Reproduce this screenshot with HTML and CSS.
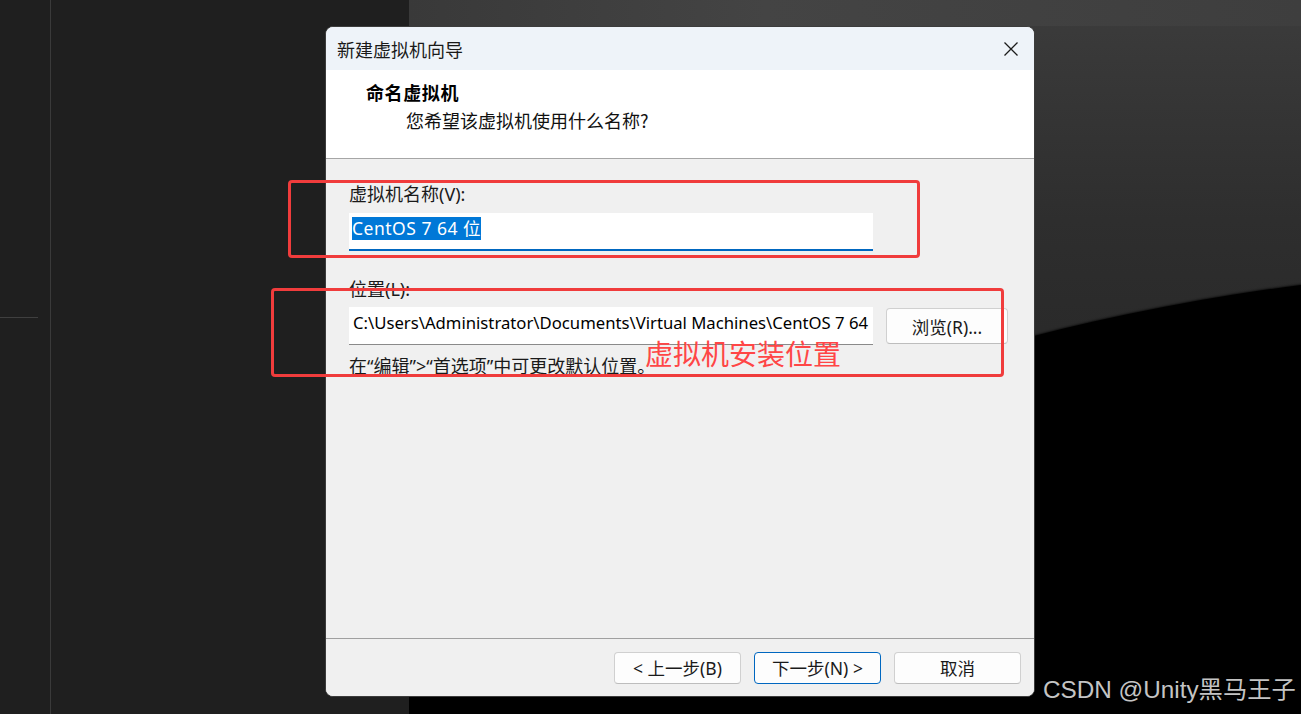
FILE: index.html
```html
<!DOCTYPE html>
<html lang="zh-CN">
<head>
<meta charset="utf-8">
<title>新建虚拟机向导</title>
<link rel="stylesheet" href="styles.css">
</head>
<body>
<div class="desktop">
  <div class="side">
    <div class="rail"><div class="rail-tick"></div></div>
  </div>
  <div class="stage">
    <div class="stage-top"></div>
    <div class="floor"></div>
  </div>
</div>

<div class="dialog">
  <div class="titlebar">
    <span class="title">新建虚拟机向导</span>
    <button class="close" aria-label="关闭">
      <svg width="16" height="16" viewBox="0 0 16 16"><path d="M1.5 1.5 L14.5 14.5 M14.5 1.5 L1.5 14.5" stroke="#1b1b1b" stroke-width="1.3" fill="none"/></svg>
    </button>
  </div>
  <div class="header">
    <div class="h-title">命名虚拟机</div>
    <div class="h-sub">您希望该虚拟机使用什么名称?</div>
  </div>
  <div class="body">
    <div class="label">虚拟机名称(V):</div>
    <div class="input active"><span class="sel">CentOS 7 64 位</span></div>
    <div class="label loc-label">位置(L):</div>
    <div class="row">
      <div class="input path">C:\Users\Administrator\Documents\Virtual Machines\CentOS 7 64</div>
      <button class="btn browse">浏览(R)...</button>
    </div>
    <div class="hint">在“编辑”&gt;“首选项”中可更改默认位置。</div>
  </div>
  <div class="footer">
    <button class="btn nav">&lt; 上一步(B)</button>
    <button class="btn nav primary">下一步(N) &gt;</button>
    <button class="btn nav">取消</button>
  </div>
</div>

<div class="mark mark-name"></div>
<div class="mark mark-loc"></div>
<div class="note">虚拟机安装位置</div>
<div class="watermark">CSDN @Unity黑马王子</div>
</body>
</html>
```

FILE: styles.css
```css
html, body {
  margin: 0;
  padding: 0;
  width: 1301px;
  height: 714px;
  overflow: hidden;
}
body {
  position: relative;
  background: #1f1f1f;
  font-family: "Noto Sans", "Noto Sans CJK SC", sans-serif;
}

/* desktop background */
.desktop {
  display: flex;
  width: 1301px;
  height: 714px;
  overflow: hidden;
}
.side {
  width: 409px;
  height: 714px;
  background: #1f1f1f;
}
.rail {
  width: 51px;
  height: 714px;
  box-sizing: border-box;
  padding-top: 317px;
  border-right: 1px solid #3a3a3a;
}
.rail-tick {
  width: 38px;
  height: 1px;
  background: #3f3f3f;
}
.stage {
  flex: 1;
  position: relative;
  overflow: hidden;
  background: linear-gradient(180deg, #3c3c3c 0px, #363636 90px, #2e2e2e 220px, #2a2a2a 330px);
}
.stage-top {
  height: 26px;
  background: linear-gradient(90deg, #393939, #444 40%, #3e3e3e 100%);
}
.floor {
  position: absolute;
  left: -309px;
  top: 266px;
  width: 3000px;
  height: 1890px;
  border-radius: 50%;
  background: #000;
  box-shadow: 0 -1px 2px rgba(0,0,0,0.6);
}

/* dialog window */
.dialog {
  position: absolute;
  left: 325px;
  top: 26px;
  width: 710px;
  height: 671px;
  box-sizing: border-box;
  border: 1px solid #3c3c3c;
  border-radius: 8px;
  overflow: hidden;
  display: flex;
  flex-direction: column;
  background: #f0f0f0;
}
.titlebar {
  height: 43px;
  flex: none;
  display: flex;
  align-items: center;
  justify-content: space-between;
  background: #eef3f9;
  padding-left: 11px;
}
.title {
  font-family: "Noto Sans CJK SC", sans-serif;
  font-size: 18px;
  color: #1a1a1a;
}
.close {
  width: 46px;
  height: 43px;
  border: 0;
  background: transparent;
  padding: 0;
  display: flex;
  align-items: center;
  justify-content: center;
}
.close svg { display: block; }

.header {
  flex: none;
  box-sizing: border-box;
  background: #fff;
  border-bottom: 1px solid #a6a6a6;
  padding: 10px 0 0 40px;
  height: 89px;
}
.h-title {
  font-family: "Noto Sans CJK SC", sans-serif;
  font-weight: 700;
  font-size: 18px;
  line-height: 24px;
  letter-spacing: 0.6px;
  color: #000;
}
.h-sub {
  margin-top: 4px;
  margin-left: 40px;
  font-family: "Noto Sans CJK SC", sans-serif;
  font-size: 18px;
  line-height: 24px;
  color: #111;
}

.body {
  flex: 1;
  box-sizing: border-box;
  padding: 23px 0 0 23px;
  border-bottom: 1px solid #a0a0a0;
  color: #000;
}
.label {
  font-family: "Noto Sans", "Noto Sans CJK SC", sans-serif;
  font-size: 18px;
  line-height: 24px;
  height: 24px;
  margin-bottom: 7px;
  color: #1a1a1a;
}
.loc-label {
  margin-top: 26px;
  margin-bottom: 6px;
}
.input {
  width: 524px;
  height: 38px;
  box-sizing: border-box;
  background: #fff;
  padding: 4px 3px 0;
  font-size: 17px;
  line-height: 23px;
  white-space: nowrap;
  overflow: hidden;
  border-bottom: 1px solid #8a8a8a;
  color: #000;
}
.input.path {
  font-size: 16.7px;
  padding-left: 4px;
}
.input.active {
  border-bottom: 2px solid #0067c0;
}
.sel {
  display: inline-block;
  background: #0078d7;
  color: #fff;
  font-size: 17.5px;
  letter-spacing: 0.5px;
}
.row {
  display: flex;
  align-items: center;
}
.btn {
  font-family: "Noto Sans", "Noto Sans CJK SC", sans-serif;
  font-size: 17.5px;
  color: #1a1a1a;
  background: #fdfdfd;
  border: 1px solid #d0d0d0;
  border-bottom-color: #bdbdbd;
  border-radius: 4px;
  padding: 0;
  box-sizing: border-box;
}
.browse {
  margin-left: 13px;
  width: 122px;
  height: 36px;
}
.hint {
  margin-top: 9px;
  font-size: 18px;
  line-height: 24px;
  color: #1a1a1a;
}

.footer {
  height: 57px;
  flex: none;
  display: flex;
  align-items: center;
  justify-content: flex-end;
  gap: 13px;
  padding-right: 13px;
  background: #f0f0f0;
}
.nav {
  width: 127px;
  height: 32px;
}
.nav.primary {
  border: 1px solid #0067c0;
}

/* annotation overlays */
.mark {
  position: absolute;
  box-sizing: border-box;
  border: 3px solid #f03c3c;
  border-radius: 4px;
}
.mark-name {
  left: 288px;
  top: 180px;
  width: 632px;
  height: 78px;
}
.mark-loc {
  left: 271px;
  top: 288px;
  width: 733px;
  height: 89px;
}
.note {
  position: absolute;
  left: 645px;
  top: 335px;
  font-family: "Noto Sans CJK SC", sans-serif;
  font-size: 28px;
  line-height: 36px;
  color: #ff4646;
}
.watermark {
  position: absolute;
  left: 1043px;
  top: 674px;
  font-family: "Liberation Sans", "Noto Sans CJK SC", sans-serif;
  font-size: 24.3px;
  line-height: 32px;
  color: #c4c4c4;
  text-shadow: 0 0 1px rgba(0,0,0,0.6);
  white-space: nowrap;
}
```
